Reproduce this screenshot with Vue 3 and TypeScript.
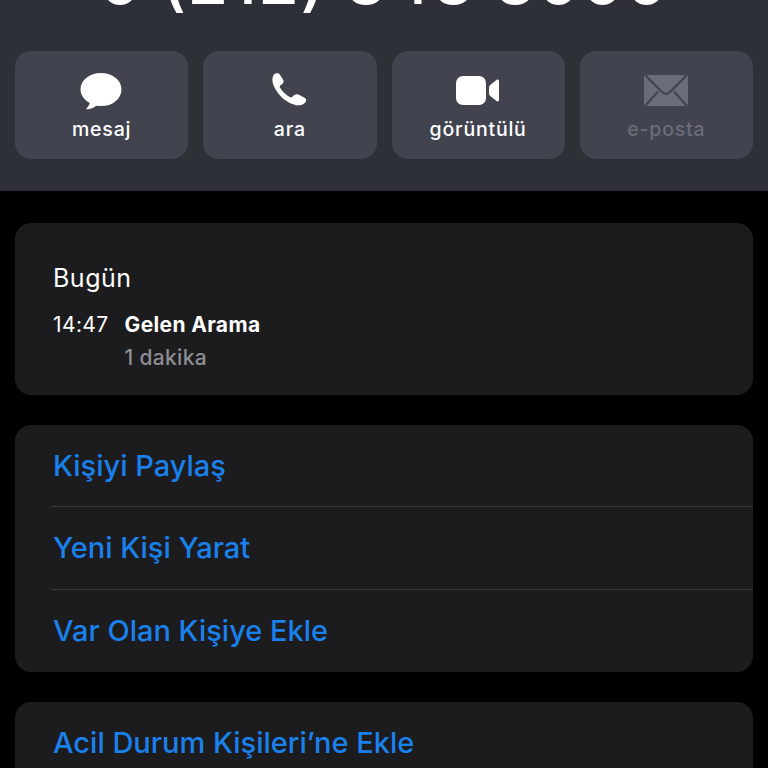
<script setup lang="ts">
const rows: string[] = ['Kişiyi Paylaş', 'Yeni Kişi Yarat', 'Var Olan Kişiye Ekle']
</script>

<template>
  <main class="screen">
    <header class="head">
      <h1 class="number">0 (212) 343 3000</h1>
      <nav class="actions">
        <div class="action">
          <svg class="icon" viewBox="0 0 44 40" width="44" height="40">
            <path fill="#fff" d="M21 2C9.600 2 .5 9.100.5 18.200c0 5.800 3.700 10.800 9.300 13.700-.5 1.900-1.700 3.900-3.300 5.300-.5.500-.2 1.100.5 1.100 3.300 0 6.700-1.500 9.300-3.600 1.500.3 3.100.4 4.700.4 11.400 0 20.500-7.100 20.500-16.900C41.500 9.100 32.400 2 21 2z"/>
          </svg>
          <span class="label">mesaj</span>
        </div>
        <div class="action">
          <svg class="icon" viewBox="0 0 44 40" width="44" height="40">
            <path fill="#fff" transform="translate(-3.900 0) scale(1.130 1)" d="M9.300 2.800c1.700-1 3.700-.7 4.700.9l2.700 4.800c.9 1.600.6 3.300-.6 4.400l-1.900 1.600c-.5.500-.6 1-.3 1.700 1.100 2.200 2.300 4 3.800 5.600 1.600 1.700 3.300 3.200 5.400 4.400.6.300 1.100.3 1.600-.2l1.800-1.800c1.200-1.100 2.900-1.300 4.400-.4l4.800 2.900c1.700 1 2 3.100.9 4.600-1.500 2-3.500 3.100-5.900 3-4.700-.2-10.200-3.100-15-7.900C11.500 21.400 8 15.500 7.400 10.300c-.3-2.500.3-5.800 1.900-7.500z"/>
          </svg>
          <span class="label">ara</span>
        </div>
        <div class="action">
          <svg class="icon" viewBox="0 0 44 40" width="44" height="40">
            <rect fill="#fff" x="0" y="5" width="30" height="29" rx="7"/>
            <path fill="#fff" d="M33 16.500c0-1 .4-1.800 1.200-2.500l6.300-5c1.300-.9 2.500-.2 2.500 1.300v18.400c0 1.500-1.200 2.200-2.500 1.300l-6.300-5c-.8-.7-1.200-1.500-1.200-2.500z"/>
          </svg>
          <span class="label">görüntülü</span>
        </div>
        <div class="action off">
          <svg class="icon" viewBox="0 0 44 40" width="44" height="40">
            <path fill="#6a6c79" d="M0 4h44v31H0z"/>
            <path fill="none" stroke="#41434f" stroke-width="2.200" d="M1 4l17 17c2.300 2.300 5.700 2.300 8 0L43 4M1 35l13-14.500M43 35L30 20.500"/>
          </svg>
          <span class="label">e-posta</span>
        </div>
      </nav>
    </header>

    <section class="card log">
      <h2 class="day">Bugün</h2>
      <div class="entry">
        <span class="time">14:47</span>
        <div class="detail">
          <strong class="kind">Gelen Arama</strong>
          <span class="len">1 dakika</span>
        </div>
      </div>
    </section>

    <section class="card list">
      <div v-for="row in rows" :key="row" class="row"><span class="link">{{ row }}</span></div>
    </section>

    <section class="card list">
      <div class="row"><span class="link">Acil Durum Kişileri’ne Ekle</span></div>
    </section>
  </main>
</template>

<style scoped>
.screen {
  width: 768px;
  height: 768px;
  overflow: hidden;
  background: #000;
  font-family: Inter, "Liberation Sans", sans-serif;
  color: #fff;
}
.head {
  height: 191px;
  box-sizing: border-box;
  overflow: hidden;
  background: #2e3038;
  padding: 0 15px;
}
.number {
  margin: -50px 0 0;
  height: 101px;
  line-height: 60px;
  font-size: 66px;
  font-weight: 500;
  letter-spacing: 1.400px;
  text-align: center;
  white-space: nowrap;
}
.actions {
  display: grid;
  grid-template-columns: repeat(4, 1fr);
  gap: 15px;
}
.action {
  height: 108px;
  box-sizing: border-box;
  padding-top: 20px;
  border-radius: 16px;
  background: #41434f;
  display: flex;
  flex-direction: column;
  align-items: center;
}
.icon {
  display: block;
  height: 40px;
}
.label {
  margin-top: 6px;
  font-size: 19.500px;
  line-height: 24px;
  font-weight: 500;
  letter-spacing: 0.800px;
}
.off .label {
  color: #6a6c79;
}
.card {
  margin: 30px 15px 0;
  border-radius: 16px;
  background: #1c1c1e;
}
.log {
  margin-top: 32px;
  height: 172px;
  box-sizing: border-box;
  padding: 39px 38px 0;
}
.day {
  margin: 0;
  font-size: 25px;
  line-height: 32px;
  font-weight: 400;
  letter-spacing: 0.500px;
}
.entry {
  margin-top: 19px;
  display: flex;
  gap: 16px;
}
.time {
  font-size: 21px;
  line-height: 24px;
  letter-spacing: 0.400px;
}
.detail {
  display: flex;
  flex-direction: column;
  gap: 9px;
}
.kind {
  font-size: 21px;
  line-height: 24px;
  font-weight: 700;
  letter-spacing: 0.350px;
}
.len {
  font-size: 21px;
  line-height: 24px;
  letter-spacing: 0.300px;
  font-weight: 500;
  color: #8d8d93;
}
.row {
  height: 82.330px;
  box-sizing: border-box;
  margin-left: 36px;
  padding-left: 2px;
  display: flex;
  align-items: center;
  border-bottom: 1px solid #3a3a3c;
}
.row:last-child {
  border-bottom: none;
}
.link {
  font-size: 29px;
  line-height: 34px;
  font-weight: 500;
  color: #1a80ec;
}
</style>
